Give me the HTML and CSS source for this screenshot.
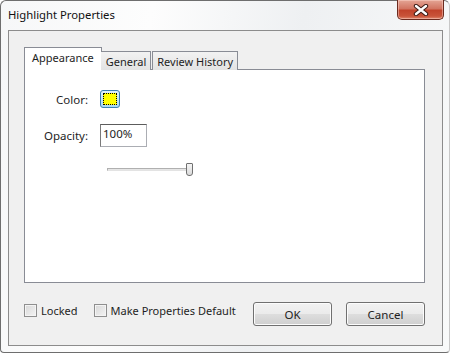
FILE: index.html
```html
<!DOCTYPE html>
<html lang="en">
  <head>
    <meta charset="UTF-8" />
    <title>Highlight Properties</title>
    <link rel="stylesheet" href="styles.css">
  </head>
  <body>
    <div class="window">
      <header class="titlebar">
        <span class="caption">Highlight Properties</span>
        <div class="close">
          <svg width="18" height="12" viewBox="0 0 18 12">
            <path d="M4 2 L14 10 M14 2 L4 10" stroke="#3b1a14" stroke-width="4.4" stroke-linecap="round" />
            <path d="M4 2 L14 10 M14 2 L4 10" stroke="#fff" stroke-width="2.4" stroke-linecap="round" />
          </svg>
        </div>
      </header>
      <main class="client">
        <div class="tabs">
          <div class="tab active">Appearance</div>
          <div class="tab">General</div>
          <div class="tab">Review History</div>
        </div>
        <section class="panel">
          <div class="fields">
            <span class="label">Color:</span>
            <div class="swatch"><span></span></div>
            <span class="label">Opacity:</span>
            <div class="edit">100%</div>
            <span></span>
            <div class="slider">
              <div class="track"></div>
              <div class="thumb"></div>
            </div>
          </div>
        </section>
        <div class="bottom">
          <label class="check"><span class="box"></span>Locked</label>
          <label class="check"><span class="box"></span>Make Properties Default</label>
          <div class="buttons">
            <div class="button">OK</div>
            <div class="button">Cancel</div>
          </div>
        </div>
      </main>
    </div>
  </body>
</html>
```
FILE: styles.css
```css
* {
  margin: 0;
  padding: 0;
  box-sizing: border-box;
}
body {
  width: 450px;
  height: 353px;
  overflow: hidden;
  background: #fff;
  font-family: "Noto Sans", "Open Sans", sans-serif;
  font-size: 11px;
  color: #1e1e1e;
}
.window {
  width: 450px;
  height: 353px;
  display: flex;
  flex-direction: column;
  border: 1px solid #6e6e6e;
  border-right-color: #c8c8c8;
  border-radius: 6px 6px 4px 4px;
  background: linear-gradient(100deg, #f6f7f8 0%, #fdfdfd 30%, #eef0f2 60%, #f9fafa 100%);
}
.titlebar {
  height: 29px;
  display: flex;
  align-items: flex-start;
  justify-content: space-between;
  padding-left: 7px;
}
.caption {
  margin-top: 6px;
  font-size: 11.3px;
  color: #111;
}
.close {
  width: 47px;
  height: 20px;
  margin-top: -1px;
  margin-right: 5px;
  display: flex;
  align-items: center;
  justify-content: center;
  border: 1px solid #6b2b1f;
  border-top: none;
  border-radius: 0 0 5px 5px;
  background: linear-gradient(#e4a595 0%, #d27562 45%, #c1432b 55%, #c9543a 85%, #e0896f 100%);
  box-shadow: inset 0 0 0 1px rgba(255, 220, 210, 0.45);
}
.client {
  height: 316px;
  margin: 0 6px 0 7px;
  border: 1px solid #8c8c8c;
  background: #f0f0f0;
  padding: 16px 17px 0 15px;
  display: flex;
  flex-direction: column;
}
.tabs {
  display: flex;
  align-items: flex-end;
  height: 23px;
  margin-bottom: -1px;
  position: relative;
  z-index: 1;
}
.tab {
  height: 19px;
  padding: 0 4px;
  border: 1px solid #898c95;
  border-bottom: none;
  background: linear-gradient(#f2f2f2, #e3e3e3);
  display: flex;
  align-items: center;
}
.tab + .tab {
  margin-left: 1px;
}
.tab.active {
  height: 23px;
  padding: 0 7px 3px 7px;
  background: #fff;
  margin-right: -1px;
}
.tab.active + .tab {
  margin-left: 0;
  border-left: none;
  padding-left: 5px;
}
.panel {
  height: 214px;
  border: 1px solid #898c95;
  background: #fff;
  padding-top: 20px;
}
.fields {
  display: grid;
  grid-template-columns: 63px auto;
  column-gap: 12px;
  row-gap: 16px;
  align-items: center;
  justify-items: start;
}
.label {
  justify-self: end;
  font-size: 11.5px;
}
.swatch {
  width: 20px;
  height: 18px;
  border: 1px solid #3c7fb1;
  border-radius: 3px;
  background: linear-gradient(#dff2fc, #a7d9f5);
  padding: 2px;
}
.swatch span {
  display: block;
  width: 100%;
  height: 100%;
  background: #ffff00;
  border: 1px dotted #000;
}
.edit {
  width: 47px;
  height: 23px;
  border: 1px solid #abadb3;
  border-top-color: #5c5c5c;
  border-left-color: #7a7a7a;
  background: #fff;
  padding: 1px 2px;
  font-size: 11.5px;
  line-height: 16px;
}
.slider {
  margin-left: 7px;
  width: 86px;
  height: 13px;
  display: flex;
  align-items: center;
  position: relative;
}
.track {
  width: 82px;
  height: 3px;
  border: 1px solid #b0b0b0;
  border-bottom-color: #e3e3e3;
  background: #e6e6e6;
}
.thumb {
  position: absolute;
  left: 79px;
  top: 0;
  width: 7px;
  height: 13px;
  border: 1px solid #707070;
  border-radius: 1px 1px 3px 3px;
  background: linear-gradient(#f5f5f5, #dadada);
}
.bottom {
  margin-top: 19px;
  height: 24px;
  display: flex;
  align-items: center;
}
.check {
  display: flex;
  align-items: center;
  gap: 4px;
  margin-top: -8px;
}
.check + .check {
  margin-left: 16px;
}
.box {
  width: 13px;
  height: 13px;
  border: 1px solid #8f8f8f;
  background: linear-gradient(135deg, #d8d8d8, #f4f4f4);
  box-shadow: inset 0 0 0 1px #f4f4f4;
}
.buttons {
  margin-left: auto;
  display: flex;
  gap: 14px;
}
.button {
  width: 79px;
  height: 24px;
  border: 1px solid #707070;
  border-radius: 3px;
  background: linear-gradient(#f2f2f2 0%, #ebebeb 48%, #dddddd 52%, #cfcfcf 100%);
  box-shadow: inset 0 0 0 1px #fcfcfc;
  display: flex;
  align-items: center;
  justify-content: center;
  font-size: 11.5px;
}
```
